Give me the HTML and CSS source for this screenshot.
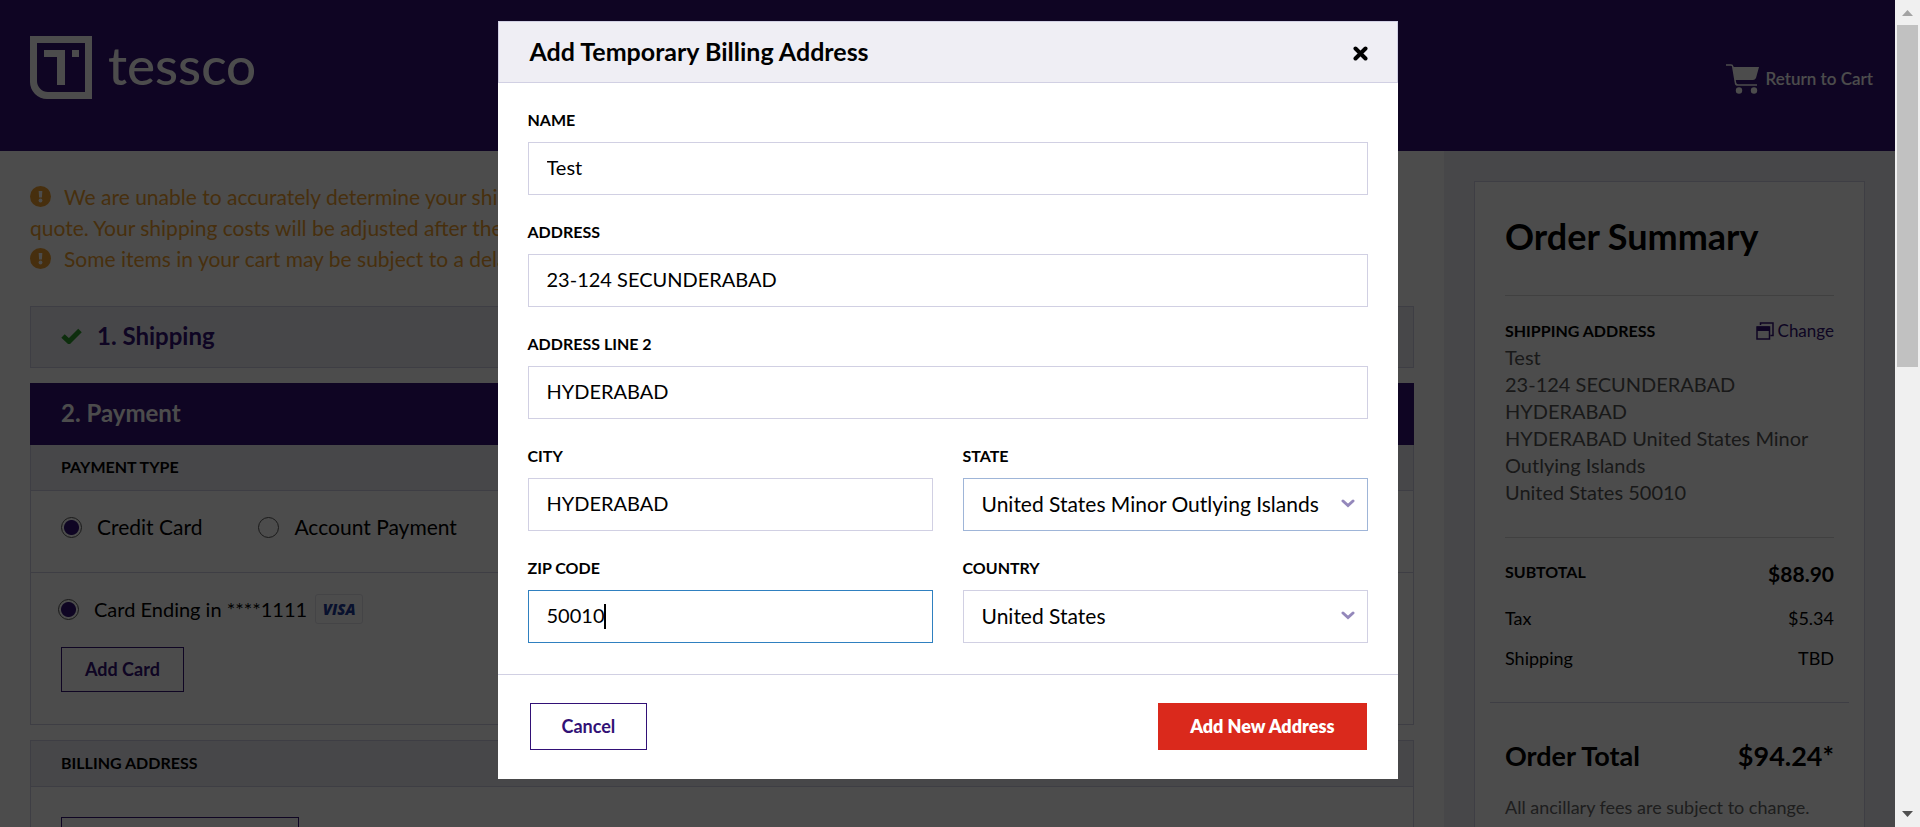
FILE: index.html
```html
<!DOCTYPE html>
<html lang="en">
<head>
<meta charset="utf-8">
<title>Tessco Checkout</title>
<link rel="stylesheet" href="styles.css">
</head>
<body>
<div class="window">
  <div class="page">
    <header class="site-header">
      <a class="logo" href="#" aria-label="tessco">
        <svg class="logo-mark" viewBox="0 0 62 63" aria-hidden="true">
          <path fill-rule="evenodd" d="M0 0H62V63H17A17 17 0 0 1 0 46ZM7 7V45A11 11 0 0 0 18 56H55V7Z"/>
          <path d="M14 14H35V49H27V21H14ZM42 14H49V21H42Z"/>
        </svg>
        <span class="logo-word">tessco</span>
      </a>
      <a class="cart-link" href="#">
        <svg class="cart-icon" viewBox="0 0 33 30" aria-hidden="true">
          <path d="M7 3H33L30 14Q29 16 27 16H9Z"/>
          <path class="cart-line" d="M0 1H5Q6.500 1 6.700 2.500L9.500 19Q9.800 21 12 21H31"/>
          <circle cx="13" cy="26.500" r="3.200"/><circle cx="28" cy="26.500" r="3.200"/>
        </svg>
        <span>Return to Cart</span>
      </a>
    </header>

    <div class="columns">
      <main class="checkout">
        <div class="alerts">
          <p class="alert">
            <svg class="alert-icon" viewBox="0 0 21 21" aria-hidden="true"><circle cx="10.500" cy="10.500" r="10.500"/><path class="cut" d="M8.700 5H12.300L11.900 11.500H9.100Z"/><circle class="cut" cx="10.500" cy="14.500" r="1.900"/></svg>We are unable to accurately determine your shipping costs until your order has been packed for<br>quote. Your shipping costs will be adjusted after the order has been processed.
          </p>
          <p class="alert">
            <svg class="alert-icon" viewBox="0 0 21 21" aria-hidden="true"><circle cx="10.500" cy="10.500" r="10.500"/><path class="cut" d="M8.700 5H12.300L11.900 11.500H9.100Z"/><circle class="cut" cx="10.500" cy="14.500" r="1.900"/></svg>Some items in your cart may be subject to a delay.
          </p>
        </div>

        <section class="step step-done">
          <svg class="check" viewBox="0 0 21 16" aria-hidden="true"><path d="M2 8L8 13.500L19 2.500"/></svg>
          <h2>1. Shipping</h2>
        </section>

        <section class="panel">
          <h2 class="panel-title">2. Payment</h2>
          <h3 class="panel-sub">PAYMENT TYPE</h3>
          <div class="pay-types">
            <label class="choice"><input type="radio" name="type" checked>Credit Card</label>
            <label class="choice"><input type="radio" name="type">Account Payment</label>
          </div>
          <div class="cards">
            <div class="card-row">
              <label class="choice"><input type="radio" name="card" checked>Card Ending in ****1111</label>
              <span class="visa">VISA</span>
            </div>
            <button class="outline-btn" type="button">Add Card</button>
          </div>
        </section>

        <section class="panel">
          <h3 class="panel-sub">BILLING ADDRESS</h3>
          <div class="billing">
            <button class="outline-btn" type="button">Add Temporary Address</button>
          </div>
        </section>
      </main>

      <aside class="side">
        <div class="summary">
          <h1>Order Summary</h1>
          <section class="ship-to">
            <div class="line ship-head">
              <h3>SHIPPING ADDRESS</h3>
              <a class="change" href="#">
                <svg viewBox="0 0 18 18" aria-hidden="true"><path class="stroke" d="M4.500 3V1H17V13.500H14.500M1 5H13.500V17H1Z"/><path d="M1 4.500H13.500V9H1Z"/></svg>
                Change</a>
            </div>
            <address>Test<br>23-124 SECUNDERABAD<br>HYDERABAD<br>HYDERABAD United States Minor Outlying Islands<br>United States 50010</address>
          </section>
          <div class="line subtotal"><h3>SUBTOTAL</h3><strong>$88.90</strong></div>
          <div class="line fee"><span>Tax</span><span>$5.34</span></div>
          <div class="line fee"><span>Shipping</span><span>TBD</span></div>
          <hr>
          <div class="line total"><span>Order Total</span><span>$94.24*</span></div>
          <p class="note">All ancillary fees are subject to change.</p>
        </div>
      </aside>
    </div>

    <div class="overlay">
      <form class="modal" role="dialog" aria-labelledby="dialog-title">
        <div class="modal-head">
          <h2 id="dialog-title">Add Temporary Billing Address</h2>
          <button class="close" type="button" aria-label="Close">
            <svg viewBox="0 0 15 15" aria-hidden="true"><path d="M2.500 2.500L12.500 12.500M12.500 2.500L2.500 12.500"/></svg>
          </button>
        </div>
        <div class="modal-body">
          <div class="field wide"><label for="name">NAME</label><input id="name" type="text" value="Test"></div>
          <div class="field wide"><label for="address">ADDRESS</label><input id="address" type="text" value="23-124 SECUNDERABAD"></div>
          <div class="field wide"><label for="address2">ADDRESS LINE 2</label><input id="address2" type="text" value="HYDERABAD"></div>
          <div class="field"><label for="city">CITY</label><input id="city" type="text" value="HYDERABAD"></div>
          <div class="field">
            <label for="state">STATE</label>
            <div class="control">
              <select id="state" class="recent"><option>United States Minor Outlying Islands</option></select>
              <svg class="chevron" viewBox="0 0 14 9" aria-hidden="true"><path d="M2 2L7 6.500L12 2"/></svg>
            </div>
          </div>
          <div class="field">
            <label for="zip">ZIP CODE</label>
            <div class="control"><input id="zip" class="active" type="text" value="50010"><span class="caret"></span></div>
          </div>
          <div class="field">
            <label for="country">COUNTRY</label>
            <div class="control">
              <select id="country"><option>United States</option></select>
              <svg class="chevron" viewBox="0 0 14 9" aria-hidden="true"><path d="M2 2L7 6.500L12 2"/></svg>
            </div>
          </div>
        </div>
        <div class="modal-foot">
          <button class="cancel" type="button">Cancel</button>
          <button class="submit" type="button">Add New Address</button>
        </div>
      </form>
    </div>
  </div>

  <div class="scrollbar" aria-hidden="true">
    <svg class="arrow up" viewBox="0 0 25 25"><path d="M7 16L12.500 10L18 16Z"/></svg>
    <div class="track"><div class="thumb"></div></div>
    <svg class="arrow down" viewBox="0 0 25 25"><path d="M7 9L12.500 15L18 9Z"/></svg>
  </div>
</div>
</body>
</html>
```
FILE: styles.css
```css
:root {
  --purple: #321176;
  --tint: #efeef4;
  --line: #d1d0e3;
  --pad: 30px;
}
* { box-sizing: border-box; }
body {
  margin: 0;
  font-family: Lato, "Open Sans", sans-serif;
  font-size: 20px;
  color: #000;
}
h1, h2, h3, p { margin: 0; }
a { color: inherit; text-decoration: none; }
button, input, select { font: inherit; color: inherit; }
button { cursor: pointer; }

.window { display: grid; grid-template-columns: minmax(0, 1fr) 25px; height: 100vh; overflow: hidden; }
.page { position: relative; overflow: hidden; background: #fff; }

/* Header */
.site-header {
  display: flex;
  align-items: center;
  justify-content: space-between;
  padding: 36px 22px 52px var(--pad);
  background: var(--purple);
  color: #fff;
}
.logo { display: flex; align-items: center; gap: 16px; fill: #fff; }
.logo-mark { width: 62px; height: 63px; }
.logo-word { padding-bottom: 5px; font-size: 53px; font-weight: 500; line-height: 58px; }
.cart-link { display: flex; align-items: center; gap: 7px; font-size: 17px; font-weight: 600; padding-top: 22px; }
.cart-icon { width: 33px; height: 30px; fill: #fff; }
.cart-line { fill: none; stroke: #fff; stroke-width: 1.5; }

/* Columns */
.columns { display: grid; grid-template-columns: minmax(0, 1fr) 23.8%; }
.checkout { padding: var(--pad); display: flex; flex-direction: column; gap: 15px; }
.alerts { margin-bottom: 17px; color: #ef9f2f; font-size: 21px; line-height: 31px; }
.alert-icon { width: 21px; height: 21px; margin-right: 13px; vertical-align: -2px; fill: #ef9f2f; }
.alert-icon .cut { fill: #fff; }

.step { display: flex; align-items: center; gap: 15px; padding: 14px var(--pad) 16px; border: 1px solid var(--line); background: var(--tint); }
.step h2, .panel-title, .modal-head h2 { font-size: 24px; line-height: 30px; font-weight: 700; }
.step h2 { color: var(--purple); }
.check { width: 21px; height: 16px; fill: none; stroke: #2c9a2c; stroke-width: 5; }
.panel { border: 1px solid var(--line); }
.panel-title { margin: -1px -1px 0; padding: 15px 31px 17px; background: var(--purple); color: #fff; }
.panel-sub { padding: 11px var(--pad) 13px; border-bottom: 1px solid var(--line); background: var(--tint); }
h3 { font-size: 16px; line-height: 21px; font-weight: 700; }
.pay-types { display: flex; gap: 56px; padding: 20px var(--pad) 29px; border-bottom: 1px solid var(--line); font-size: 21px; }
.choice { display: flex; align-items: center; gap: 15px; line-height: 32px; }
.choice input {
  appearance: none;
  width: 21px;
  height: 21px;
  margin: 0;
  border: 1px solid #555;
  border-radius: 50%;
}
.choice input:checked { background: radial-gradient(circle, var(--purple) 7px, #fff 8px); }
.cards { padding: 20px var(--pad) 32px; }
.card-row { display: flex; align-items: center; gap: 8px; margin: 0 0 22px -3px; }
.visa {
  width: 48px;
  border: 1px solid #e3e3ea;
  border-radius: 3px;
  color: #1d3a9a;
  font: italic 800 15px/28px "Open Sans", sans-serif;
  text-align: center;
}
.outline-btn { padding: 0 23px; border: 1px solid var(--purple); background: transparent; color: var(--purple); font-size: 18px; font-weight: 700; line-height: 43px; }
.billing { padding: var(--pad); }

/* Order summary */
.side { padding: var(--pad); background: var(--tint); }
.summary { border: 1px solid var(--line); padding: 29px var(--pad); background: #fff; }
.summary h1 { font-size: 36px; line-height: 50px; font-weight: 700; padding-bottom: 34px; border-bottom: 1px solid #d8d8d8; }
.line { display: flex; justify-content: space-between; }
.ship-to { padding: 21px 0 31px; border-bottom: 1px solid #d8d8d8; }
.ship-head { align-items: center; line-height: 27px; }
.change { display: flex; align-items: center; gap: 4px; color: var(--purple); font-size: 17px; }
.change svg { width: 18px; height: 18px; fill: var(--purple); }
.change .stroke { fill: none; stroke: var(--purple); stroke-width: 1.5; }
address { font-style: normal; line-height: 27px; color: #555; }
.subtotal { padding-top: 23px; line-height: 26px; margin-bottom: 11px; }
.subtotal strong { font-size: 21px; }
.fee { font-size: 18px; line-height: 40px; }
hr { height: 1px; margin: 24px -15px 0; border: 0; background: var(--line); }
.total { padding-top: 35px; font-size: 27px; line-height: 36px; font-weight: 700; }
.note { padding: 21px 0; font-size: 18px; line-height: 24px; color: #666; }

/* Dialog */
.overlay { position: absolute; inset: 0; display: flex; justify-content: center; align-items: flex-start; padding: 21px; background: rgba(0, 0, 0, .7); }
.modal { width: 100%; max-width: 900px; background: #fff; }
.modal-head { display: flex; align-items: center; justify-content: space-between; padding: 14px 29px 16px 31px; border: 1px solid var(--line); background: var(--tint); }
.modal-head h2 { font-size: 25px; }
.close { display: flex; padding: 5px 0 0; border: 0; background: none; }
.close svg { width: 15px; height: 15px; stroke: #000; stroke-width: 4; stroke-linecap: round; }
.modal-body { display: grid; grid-template-columns: 1fr 1fr; gap: 26px var(--pad); padding: 26px var(--pad) 31px; }
.wide { grid-column: 1 / -1; }
.field label { display: block; margin-bottom: 12px; font-size: 16px; line-height: 21px; font-weight: 700; }
.field input, .field select {
  display: block;
  width: 100%;
  height: 53px;
  padding: 0 18px 3px;
  border: 1px solid var(--line);
  border-radius: 0;
  background: #fff;
  appearance: none;
  outline: none;
}
.field select { font-size: 21px; }
.field .recent { border-color: #9fb5d8; }
.field .active { border-color: #2f80c0; }
.control { position: relative; }
.chevron { position: absolute; right: 13px; top: 21px; width: 14px; height: 9px; fill: none; stroke: #9488bb; stroke-width: 3; stroke-linecap: round; pointer-events: none; }
.caret { position: absolute; left: 76px; top: 14px; width: 2px; height: 25px; background: #000; }
.modal-foot { display: flex; justify-content: space-between; padding: 28px 31px 29px 32px; border-top: 1px solid var(--line); }
.modal-foot button { padding: 0 31px; border: 1px solid var(--purple); background: #fff; color: var(--purple); font-size: 18px; line-height: 45px; font-weight: 700; }
.modal-foot .submit { border-color: #da291c; background: #da291c; color: #fff; font-weight: 800; }

/* Scrollbar */
.scrollbar { display: flex; flex-direction: column; background: #f0f0f0; }
.arrow { width: 25px; height: 25px; }
.up { fill: #a3a3a3; }
.down { fill: #505050; }
.track { flex: 1; padding: 0 2px; }
.thumb { height: 44%; background: #c1c1c1; }
```
